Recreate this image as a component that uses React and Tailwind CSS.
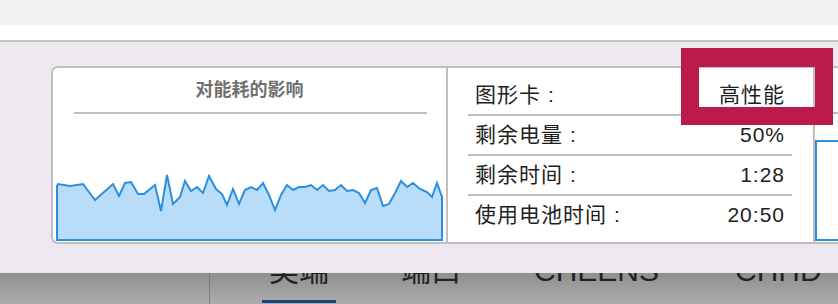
import React from 'react';

const rows = [
  { label: '图形卡', value: '高性能' },
  { label: '剩余电量', value: '50%' },
  { label: '剩余时间', value: '1:28' },
  { label: '使用电池时间', value: '20:50' },
];

// chart points in page coordinates
const wave =
  'M57,240 L57,186 L58,184 L70,186 L83,184 L95,200 L113,184 L119,196 L125,183 L131,182 L138,194 L144,194 L155,185 L161,211 L167,175 L173,204 L180,197 L185,181 L191,191 L197,187 L203,193 L209,176 L216,189 L222,194 L227,205 L233,189 L239,204 L245,190 L251,187 L257,190 L263,183 L269,195 L275,210 L281,195 L287,185 L293,190 L299,187 L305,187 L311,185 L317,190 L323,185 L329,191 L335,190 L341,185 L347,191 L353,190 L359,193 L365,203 L371,190 L377,188 L383,206 L389,204 L395,193 L401,181 L407,187 L413,183 L420,189 L427,192 L432,197 L437,183 L442,197 L442,240 Z';

const font = { fontFamily: '"Liberation Sans", "Noto Sans CJK SC", sans-serif' };

function Tab({ children, active, className = '' }) {
  return (
    <div className={`flex flex-col items-center flex-none ${className}`}>
      <span className="text-[30px] leading-[30px] text-[#222]">{children}</span>
      {active && <div className="mt-[14px] h-[2.5px] w-[74px] bg-[#1f3f78]" />}
    </div>
  );
}

export default function App() {
  return (
    <div className="relative w-[838px] h-[304px] overflow-hidden bg-white" style={font}>
      <div className="h-[25px] bg-[#f0f1f1]" />
      <div className="h-[15px] bg-white" />
      <div className="h-[2px] bg-[#c2c2c2]" />

      {/* panel */}
      <div className="h-[231px] bg-[#eee7ef] pt-[24px] pl-[51px]">
        <div className="flex flex-none w-[900px] h-[178px] bg-white border-2 border-[#bfbfbf] rounded-[7px]">
          {/* energy chart */}
          <div className="flex flex-col w-[395px] flex-none border-r-2 border-[#bfbfbf]">
            <div className="pt-[10px] text-center text-[18px] leading-[24px] font-semibold text-[#707070]">
              对能耗的影响
            </div>
            <div className="mt-[10px] ml-[21px] mr-[19px] h-[2px] bg-[#bdbdbd]" />
            <svg width="393" height="128" viewBox="53 114 393 128">
              <path d={wave} fill="#b9ddf8" stroke="#2b8fe0" strokeWidth="2" strokeLinejoin="miter" />
            </svg>
          </div>

          {/* info table */}
          <div className="w-[367px] flex-none border-r-2 border-[#bfbfbf] pt-[8px] pl-[20px] pr-[21px]">
            {rows.map((r, i) => (
              <div
                key={r.label}
                className={`flex items-center justify-between h-[38px] pl-[7px] pr-[7px] text-[21px] text-[#1e1e1e] ${
                  i < rows.length - 1 ? 'border-b-2 border-[#bdbdbd] box-content' : ''
                }`}
              >
                <span className="tracking-[1px]">
                  {r.label}
                  <span className="ml-[7px]">:</span>
                </span>
                <span className="tracking-[1px]">{r.value}</span>
              </div>
            ))}
          </div>

          {/* next chart, cut off */}
          <div className="flex flex-col flex-1">
            <div className="mt-[44px] ml-[18px] h-[2px] bg-[#bdbdbd]" />
            <svg width="300" height="128" viewBox="815 114 300 128">
              <path d="M1100,141 L816,141 L816,240 L1100,240" fill="none" stroke="#2b8fe0" strokeWidth="2" />
            </svg>
          </div>
        </div>
      </div>

      {/* tab bar underneath, partly covered */}
      <div className="h-[31px] overflow-hidden bg-gradient-to-b from-[#8f8f8f] to-[#adadad] flex">
        <div className="w-[210px] flex-none border-r border-[#7c7c7c]" />
        <div className="flex items-start ml-[52px] -mt-[17px]" style={font}>
          <Tab active>类端</Tab>
          <Tab className="ml-[65px]">端口</Tab>
          <Tab className="ml-[73px]">CHEENS</Tab>
          <Tab className="ml-[76px]">CHHD</Tab>
        </div>
      </div>

      {/* highlight annotation */}
      <div className="absolute left-[681px] top-[48px] w-[152px] h-[77px] border-x-[18px] border-t-[19px] border-b-[18px] border-[#bb1a4b]" />
    </div>
  );
}
